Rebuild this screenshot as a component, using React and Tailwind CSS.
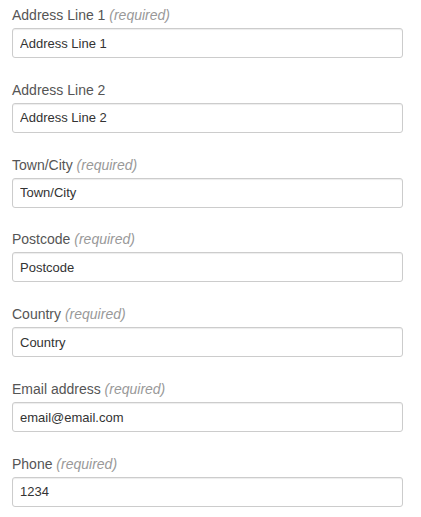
import React from "react";

const fields = [
  { label: "Address Line 1", required: true, value: "Address Line 1" },
  { label: "Address Line 2", required: false, value: "Address Line 2" },
  { label: "Town/City", required: true, value: "Town/City" },
  { label: "Postcode", required: true, value: "Postcode" },
  { label: "Country", required: true, value: "Country" },
  { label: "Email address", required: true, value: "email@email.com" },
  { label: "Phone", required: true, value: "1234" },
];

export default function App() {
  return (
    <div
      className="w-[421px] h-[517px] bg-white pl-[12px] pt-[5px]"
      style={{ fontFamily: '"Liberation Sans", Arial, sans-serif' }}
    >
      <div className="w-[391px] flex flex-col gap-[21.83px]">
        {fields.map((f) => (
          <div key={f.label} className="flex flex-col">
            <label className="block text-[14px] leading-5 text-[#555] mb-[3px]">
              {f.label}
              {f.required && (
                <span className="italic text-[#999]"> (required)</span>
              )}
            </label>
            <input
              type="text"
              defaultValue={f.value}
              className="block w-full h-[30px] border border-[#ccc] rounded-[3px] px-[7px] text-[13px] text-[#333] bg-white shadow-[inset_0_1px_1px_rgba(0,0,0,0.075)] outline-none"
              style={{ fontFamily: '"Liberation Sans", Arial, sans-serif' }}
            />
          </div>
        ))}
      </div>
    </div>
  );
}
